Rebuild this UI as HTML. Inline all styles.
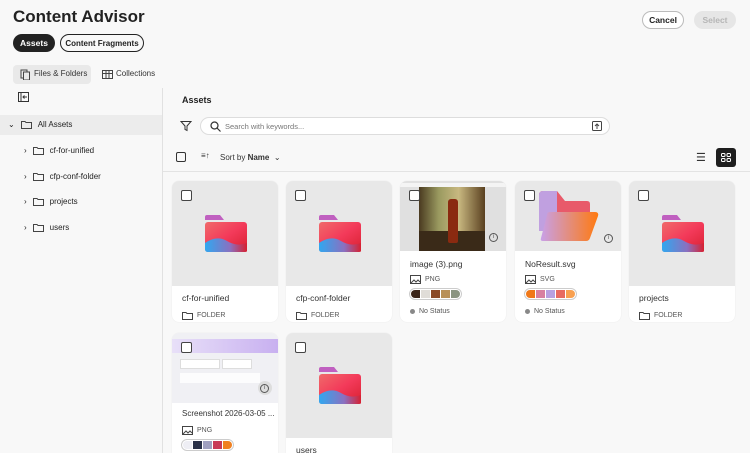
<!DOCTYPE html>
<html><head><meta charset="utf-8"><style>
*{box-sizing:border-box;margin:0;padding:0}
html,body{width:750px;height:453px;overflow:hidden}
body{background:#f8f8f8;font-family:"Liberation Sans",sans-serif;color:#222;position:relative;white-space:nowrap}
.a{position:absolute}
.pill{position:absolute;border-radius:14px;font-size:8.5px;font-weight:bold;display:flex;align-items:center;justify-content:center;white-space:nowrap}
.card{position:absolute;width:106px;border-radius:7px;background:#fff;overflow:hidden;box-shadow:0 0 1px #ddd}
.thumb{height:105px;background:#e8e8e8;position:relative;overflow:hidden}
.cb{position:absolute;left:9px;top:9px;width:11px;height:11px;border:1.6px solid #444;border-radius:2px;background:#fff}
.nm{position:absolute;left:10px;top:112px;font-size:8.5px;color:#333;width:92px;overflow:hidden}
.tp{position:absolute;left:10px;top:130px;font-size:7px;color:#555;display:flex;align-items:center;gap:4px}
.sw{position:absolute;left:9px;top:144px;height:12px;border:1px solid #ccc;border-radius:7px;padding:1px;display:flex;gap:1px;background:#fff}
.sw i{display:block;width:9px;height:8px}
.sw i:first-child{border-radius:5px 0 0 5px}.sw i:last-child{border-radius:0 5px 5px 0}
.st{position:absolute;left:10px;top:162px;font-size:7px;color:#555;display:flex;align-items:center;gap:4px}
.st:before{content:"";width:5px;height:5px;border-radius:50%;background:#888}
.tree{position:absolute;font-size:8px;color:#222;display:flex;align-items:center;gap:6px}
.info{position:absolute;right:8px;top:52px;width:9px;height:9px;border:1px solid #555;border-radius:50%;font-size:6px;text-align:center;line-height:7px;color:#555}
</style></head><body>
<div class="a" style="left:13px;top:7px;font-size:17px;font-weight:bold">Content Advisor</div>
<div class="pill" style="left:13px;top:34px;width:42px;height:18px;background:#222;color:#fff">Assets</div>
<div class="pill" style="left:60px;top:34px;width:84px;height:18px;border:1.5px solid #222;font-size:8px">Content Fragments</div>
<div class="pill" style="left:642px;top:11px;width:42px;height:18px;border:1px solid #bbb;background:#fff">Cancel</div>
<div class="pill" style="left:694px;top:11px;width:42px;height:18px;background:#e6e6e6;color:#b5b5b5">Select</div>
<div class="a" style="left:13px;top:65px;width:78px;height:19px;background:#e9e9e9;border-radius:4px"></div>
<svg class="a" style="left:20px;top:69px" width="10" height="11"><rect x="1" y="1" width="6" height="8" fill="none" stroke="#444"/><rect x="3.5" y="3" width="6" height="8" fill="#e9e9e9" stroke="#444"/></svg>
<div class="a" style="left:34px;top:69px;font-size:8px;color:#333">Files &amp; Folders</div>
<svg class="a" style="left:102px;top:70px" width="11" height="9"><rect x=".5" y=".5" width="10" height="8" fill="none" stroke="#444"/><path d="M4 .5v8M7 .5v8M.5 3.5h10" stroke="#444"/></svg>
<div class="a" style="left:116px;top:69px;font-size:8px;color:#333">Collections</div>
<svg class="a" style="left:18px;top:92px" width="11" height="10"><rect x=".5" y=".5" width="10" height="9" fill="none" stroke="#333"/><path d="M3 .5v9M5 5h4M6.5 3.5L5 5l1.5 1.5" stroke="#333" fill="none"/></svg>
<div class="a" style="left:162px;top:88px;width:1px;height:365px;background:#e1e1e1"></div>
<div class="a" style="left:0;top:115px;width:162px;height:20px;background:#ececec"></div>
<div class="tree" style="left:8px;top:120px">⌄ <svg width="11" height="9"><path d="M.5 1.5h3.5l1 1h5.5v6H.5z" fill="none" stroke="#444"/></svg> All Assets</div>
<div class="tree" style="left:24px;top:146px">› <svg width="11" height="9"><path d="M.5 1.5h3.5l1 1h5.5v6H.5z" fill="none" stroke="#444"/></svg> cf-for-unified</div>
<div class="tree" style="left:24px;top:172px">› <svg width="11" height="9"><path d="M.5 1.5h3.5l1 1h5.5v6H.5z" fill="none" stroke="#444"/></svg> cfp-conf-folder</div>
<div class="tree" style="left:24px;top:197px">› <svg width="11" height="9"><path d="M.5 1.5h3.5l1 1h5.5v6H.5z" fill="none" stroke="#444"/></svg> projects</div>
<div class="tree" style="left:24px;top:223px">› <svg width="11" height="9"><path d="M.5 1.5h3.5l1 1h5.5v6H.5z" fill="none" stroke="#444"/></svg> users</div>
<div class="a" style="left:182px;top:95px;font-size:9px;font-weight:bold">Assets</div>
<svg class="a" style="left:180px;top:120px" width="12" height="12"><path d="M1 1.5h10L7 6v4.5L5 9.5V6z" fill="none" stroke="#333"/></svg>
<div class="a" style="left:200px;top:117px;width:410px;height:18px;border:1.5px solid #ddd;border-radius:10px;background:#fff"></div>
<svg class="a" style="left:210px;top:121px" width="11" height="11"><circle cx="4.5" cy="4.5" r="3.5" fill="none" stroke="#333" stroke-width="1.2"/><path d="M7 7l3.5 3.5" stroke="#333" stroke-width="1.2"/></svg>
<div class="a" style="left:225px;top:122px;font-size:7.5px;color:#777">Search with keywords...</div>
<svg class="a" style="left:592px;top:121px" width="10" height="10"><rect x=".5" y=".5" width="9" height="9" rx="1" fill="none" stroke="#444"/><path d="M5 8V3M3 5l2-2 2 2" stroke="#444" fill="none"/></svg>
<div class="a" style="left:176px;top:152px;width:10px;height:10px;border:1.5px solid #333;border-radius:2px"></div>
<div class="a" style="left:201px;top:151px;font-size:8px;color:#333">≡↑</div>
<div class="a" style="left:220px;top:153px;font-size:8px;color:#333">Sort by <b>Name</b> &nbsp;⌄</div>
<div class="a" style="left:696px;top:151px;font-size:11px;color:#333">☰</div>
<div class="a" style="left:716px;top:148px;width:20px;height:19px;background:#1e1e1e;border-radius:3px"></div>
<svg class="a" style="left:721px;top:153px" width="10" height="9"><rect x=".5" y=".5" width="3.5" height="3" rx="1" fill="none" stroke="#fff"/><rect x="6" y=".5" width="3.5" height="3" rx="1" fill="none" stroke="#fff"/><rect x=".5" y="5.5" width="3.5" height="3" rx="1" fill="none" stroke="#fff"/><rect x="6" y="5.5" width="3.5" height="3" rx="1" fill="none" stroke="#fff"/></svg>
<div class="a" style="left:163px;top:171px;width:587px;height:1px;background:#e3e3e3"></div>

<svg width="0" height="0" style="position:absolute"><defs>
<linearGradient id="fg" x1="0" y1="0" x2="1" y2="1"><stop offset="0" stop-color="#f06a6a"/><stop offset=".5" stop-color="#f33a5a"/><stop offset="1" stop-color="#d82030"/></linearGradient>
<linearGradient id="wv" x1="0" y1="0" x2="1" y2="0"><stop offset="0" stop-color="#30a8f0"/><stop offset=".6" stop-color="#8a70c0"/><stop offset="1" stop-color="#d82030"/></linearGradient>
<linearGradient id="og" x1="0" y1="0" x2="1" y2="0"><stop offset="0" stop-color="#c8a0e8"/><stop offset="1" stop-color="#ff7a10"/></linearGradient>
</defs></svg>

<div class="card" style="left:172px;top:181px;height:141px"><div class="thumb"><div class="cb"></div>
<svg class="a" style="left:32px;top:34px" width="44" height="38"><path d="M1 2q0-2 2-2h13l4 5H1z" fill="#c060c0"/><rect x="1" y="7" width="42" height="30" rx="3" fill="url(#fg)"/><path d="M1 28q12-8 22-2t20 2v8q0 1-3 1H4q-3 0-3-3z" fill="url(#wv)"/></svg></div>
<div class="nm">cf-for-unified</div><div class="tp"><svg width="11" height="9"><path d="M.5 1.5h3.5l1 1h5.5v6H.5z" fill="none" stroke="#444"/></svg>FOLDER</div></div>

<div class="card" style="left:286px;top:181px;height:141px"><div class="thumb"><div class="cb"></div>
<svg class="a" style="left:32px;top:34px" width="44" height="38"><path d="M1 2q0-2 2-2h13l4 5H1z" fill="#c060c0"/><rect x="1" y="7" width="42" height="30" rx="3" fill="url(#fg)"/><path d="M1 28q12-8 22-2t20 2v8q0 1-3 1H4q-3 0-3-3z" fill="url(#wv)"/></svg></div>
<div class="nm">cfp-conf-folder</div><div class="tp"><svg width="11" height="9"><path d="M.5 1.5h3.5l1 1h5.5v6H.5z" fill="none" stroke="#444"/></svg>FOLDER</div></div>

<div class="card" style="left:400px;top:181px;height:141px"><div class="thumb" style="height:70px;background:#e0e0e0">
<div class="a" style="left:0;top:2px;width:106px;height:4px;background:#f4f4f4"></div>
<div class="a" style="left:19px;top:6px;width:66px;height:64px;background:linear-gradient(90deg,#4a3a20,#9a9a60 30%,#c8b880 60%,#5a4020);"></div>
<div class="a" style="left:19px;top:50px;width:66px;height:20px;background:#3a2a18"></div>
<div class="a" style="left:48px;top:18px;width:10px;height:44px;background:#8a2a10;border-radius:3px 3px 2px 2px"></div>
<div class="cb"></div><div class="info">i</div></div>
<div class="nm" style="top:78px">image (3).png</div>
<div class="tp" style="top:94px"><svg width="11" height="9"><rect x=".5" y=".5" width="10" height="8" fill="none" stroke="#444"/><path d="M1 8l3-3 2 2 2-2 2 2" stroke="#444" fill="none"/></svg>PNG</div>
<div class="sw" style="top:107px"><i style="background:#3a2418"></i><i style="background:#e0ddd8"></i><i style="background:#8a4a28"></i><i style="background:#b89058"></i><i style="background:#8a9480"></i></div>
<div class="st" style="top:127px">No Status</div></div>

<div class="card" style="left:515px;top:181px;height:141px"><div class="thumb" style="height:70px">
<svg class="a" style="left:22px;top:8px" width="64" height="58"><path d="M2 6q0-4 4-4h14l8 10h22q3 0 3 3v20H2z" fill="#e85a6a"/><path d="M2 6q0-4 4-4h14v40H2z" fill="#c0a0e0"/><path d="M10 26q0-3 3-3h45q4 0 3 4l-8 22q-1 3-4 3H6q-3 0-2-3z" fill="url(#og)"/></svg>
<div class="cb"></div><div class="info" style="top:53px">i</div></div>
<div class="nm" style="top:78px">NoResult.svg</div>
<div class="tp" style="top:94px"><svg width="11" height="9"><rect x=".5" y=".5" width="10" height="8" fill="none" stroke="#444"/><path d="M1 8l3-3 2 2 2-2 2 2" stroke="#444" fill="none"/></svg>SVG</div>
<div class="sw" style="top:107px"><i style="background:#f07818"></i><i style="background:#d880a0"></i><i style="background:#b8a0e0"></i><i style="background:#e86a60"></i><i style="background:#f8a050"></i></div>
<div class="st" style="top:127px">No Status</div></div>

<div class="card" style="left:629px;top:181px;height:141px"><div class="thumb"><div class="cb"></div>
<svg class="a" style="left:32px;top:34px" width="44" height="38"><path d="M1 2q0-2 2-2h13l4 5H1z" fill="#c060c0"/><rect x="1" y="7" width="42" height="30" rx="3" fill="url(#fg)"/><path d="M1 28q12-8 22-2t20 2v8q0 1-3 1H4q-3 0-3-3z" fill="url(#wv)"/></svg></div>
<div class="nm">projects</div><div class="tp"><svg width="11" height="9"><path d="M.5 1.5h3.5l1 1h5.5v6H.5z" fill="none" stroke="#444"/></svg>FOLDER</div></div>

<div class="card" style="left:172px;top:333px;height:130px"><div class="thumb" style="height:70px;background:#f0f0f4">
<div class="a" style="left:0;top:6px;width:106px;height:14px;background:linear-gradient(90deg,#e8e0f8,#c8b0f0)"></div>
<div class="a" style="left:8px;top:26px;width:40px;height:10px;background:#fff;border:1px solid #ddd"></div>
<div class="a" style="left:50px;top:26px;width:30px;height:10px;background:#fff;border:1px solid #ddd"></div>
<div class="a" style="left:8px;top:40px;width:80px;height:10px;background:#fff;opacity:.8"></div>
<div class="cb"></div><div class="a" style="right:6px;top:48px;width:14px;height:14px;border-radius:50%;background:#ddd"></div><div class="info" style="top:51px;right:9px">i</div></div>
<div class="nm" style="top:76px;font-size:8px">Screenshot 2026-03-05 ...</div>
<div class="tp" style="top:93px"><svg width="11" height="9"><rect x=".5" y=".5" width="10" height="8" fill="none" stroke="#444"/><path d="M1 8l3-3 2 2 2-2 2 2" stroke="#444" fill="none"/></svg>PNG</div>
<div class="sw" style="top:106px"><i style="background:#eeeef4"></i><i style="background:#2a3048"></i><i style="background:#a0a0c0"></i><i style="background:#c83a58"></i><i style="background:#f08020"></i></div></div>

<div class="card" style="left:286px;top:333px;height:130px"><div class="thumb"><div class="cb"></div>
<svg class="a" style="left:32px;top:34px" width="44" height="38"><path d="M1 2q0-2 2-2h13l4 5H1z" fill="#c060c0"/><rect x="1" y="7" width="42" height="30" rx="3" fill="url(#fg)"/><path d="M1 28q12-8 22-2t20 2v8q0 1-3 1H4q-3 0-3-3z" fill="url(#wv)"/></svg></div>
<div class="nm">users</div></div>
</body></html>
